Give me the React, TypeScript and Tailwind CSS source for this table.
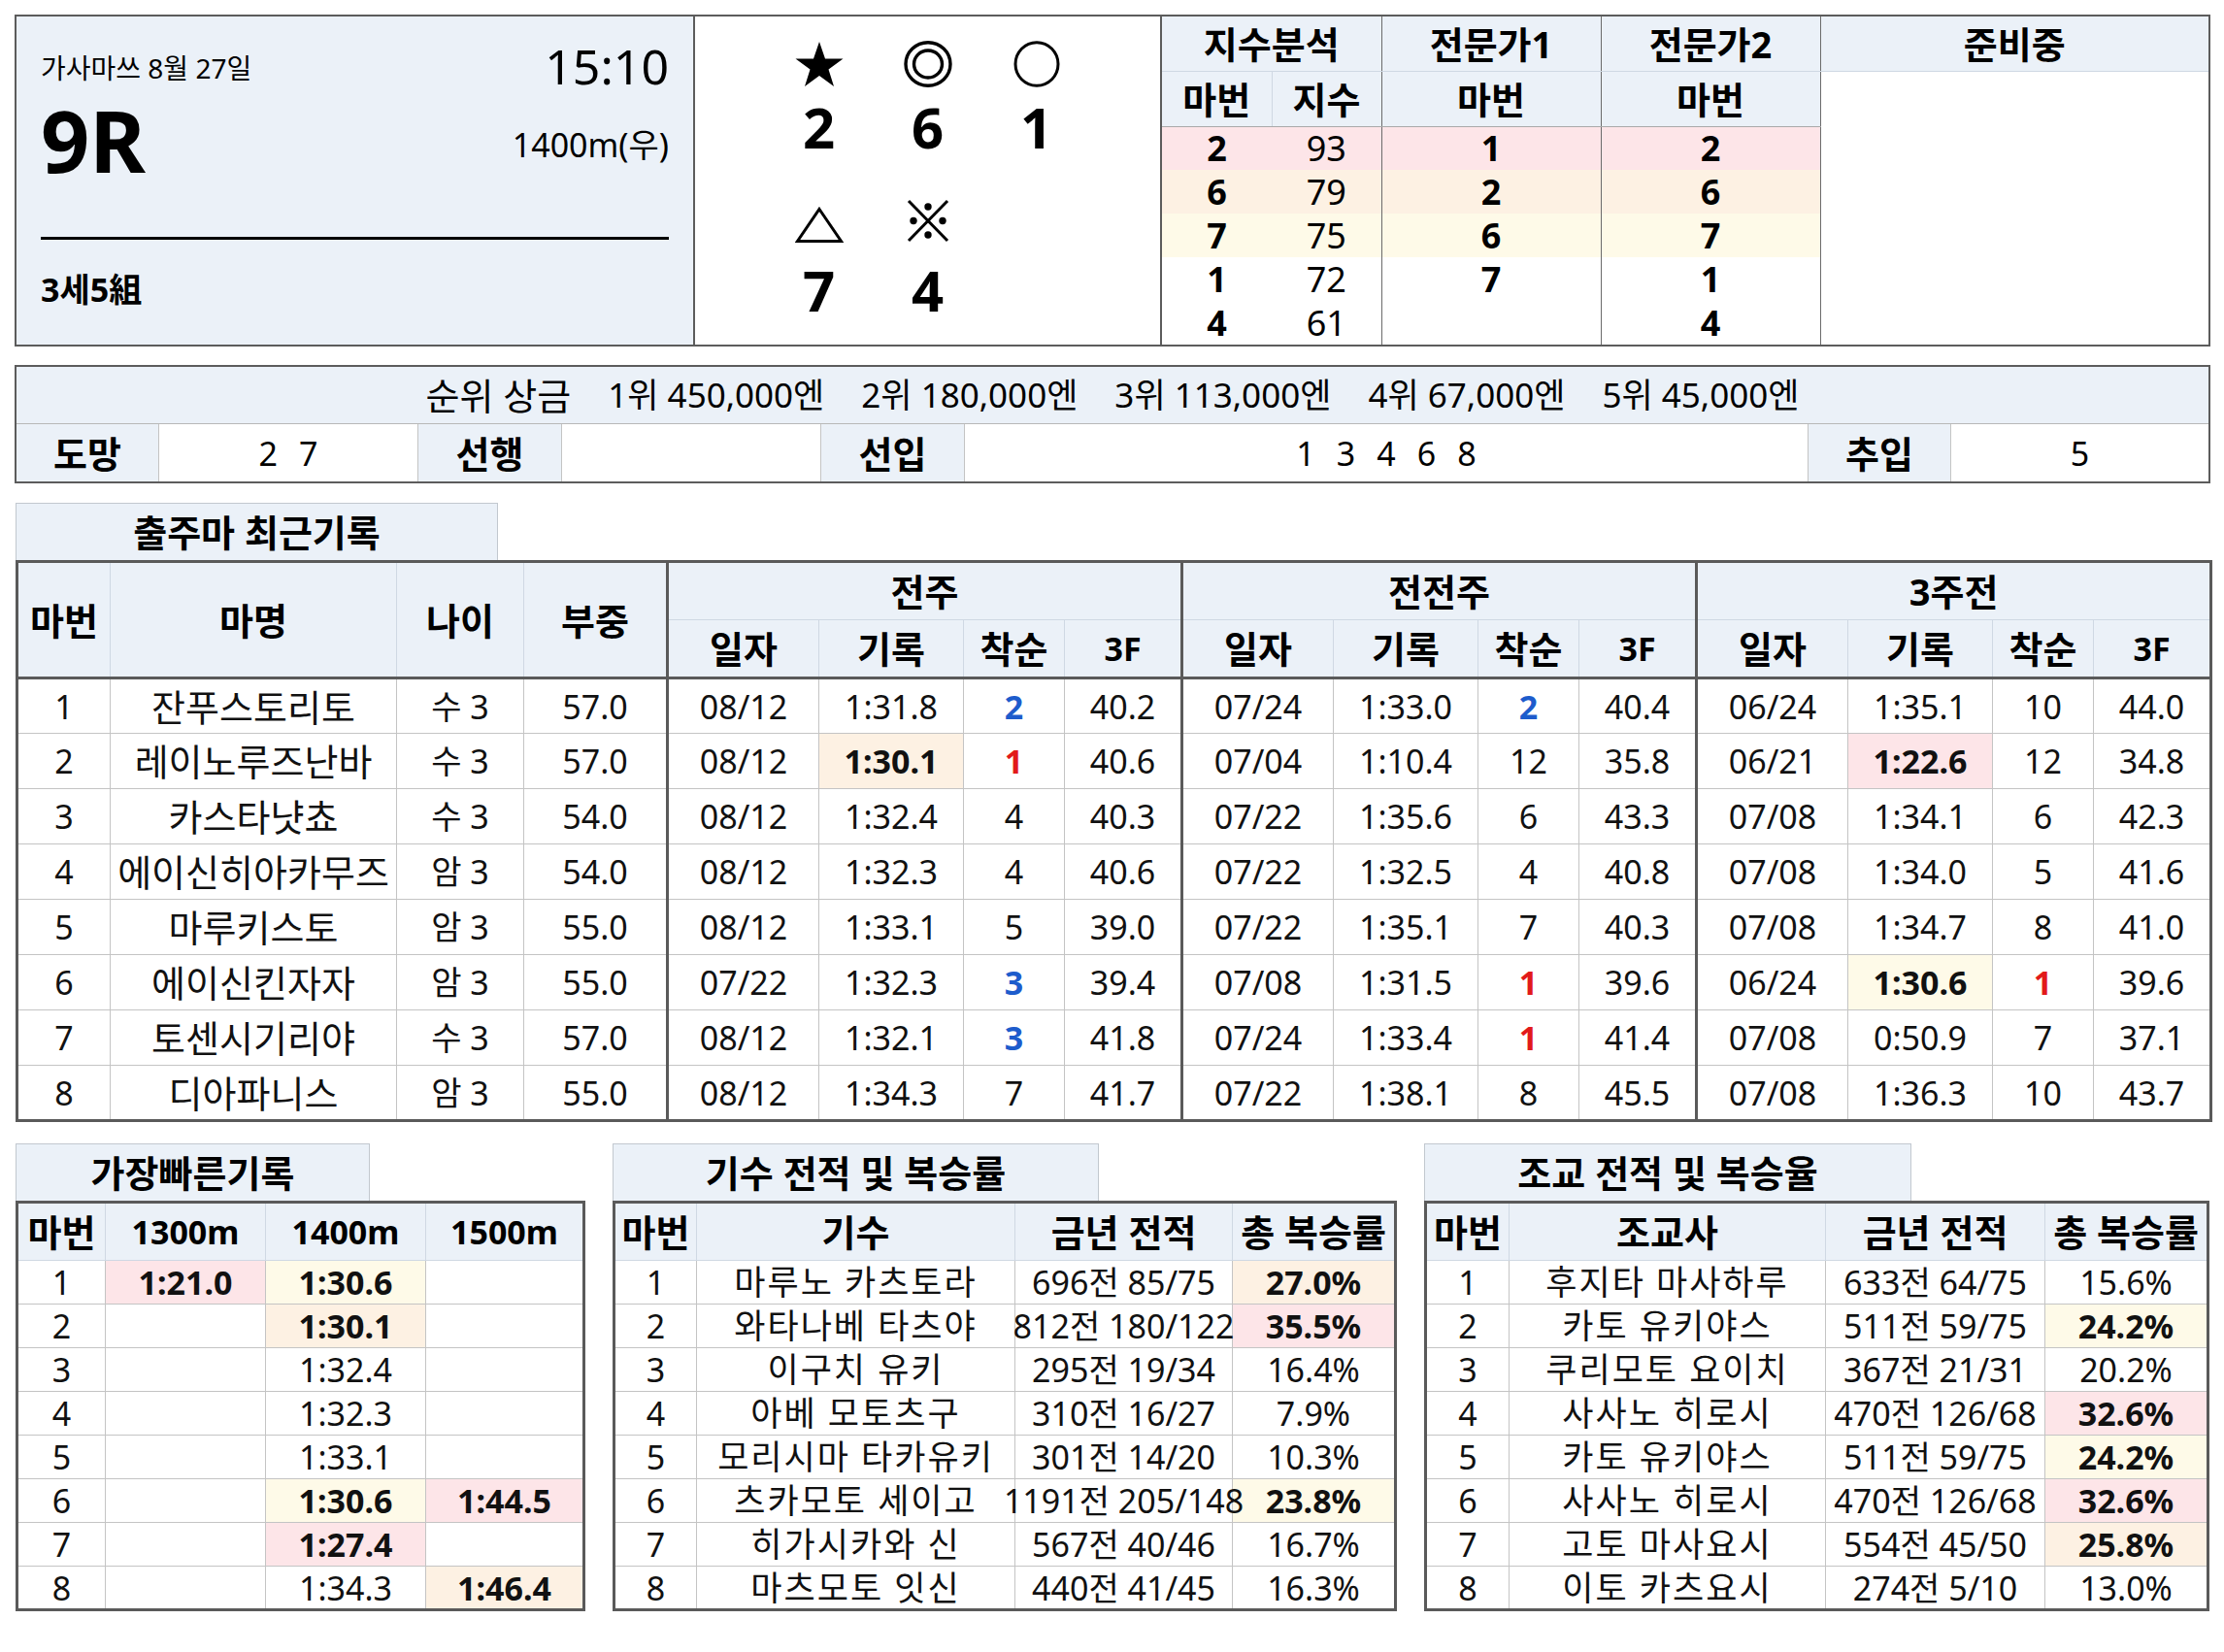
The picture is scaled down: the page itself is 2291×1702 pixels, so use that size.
import React from "react";

const HB = "bg-[#ebf1f8]";
const HL: Record<string, string> = {
  p: "bg-[#fde5e8]",
  o: "bg-[#fdf1e3]",
  y: "bg-[#fefae8]",
};

type Cell = [string, string?];

const runners = [
  { no: 1, name: "잔푸스토리토", age: "수 3", wt: "57.0", g: [["08/12", "1:31.8", "2", "40.2"], ["07/24", "1:33.0", "2", "40.4"], ["06/24", "1:35.1", "10", "44.0"]] },
  { no: 2, name: "레이노루즈난바", age: "수 3", wt: "57.0", g: [["08/12", "1:30.1", "1", "40.6", "o"], ["07/04", "1:10.4", "12", "35.8"], ["06/21", "1:22.6", "12", "34.8", "p"]] },
  { no: 3, name: "카스타냣쵸", age: "수 3", wt: "54.0", g: [["08/12", "1:32.4", "4", "40.3"], ["07/22", "1:35.6", "6", "43.3"], ["07/08", "1:34.1", "6", "42.3"]] },
  { no: 4, name: "에이신히아카무즈", age: "암 3", wt: "54.0", g: [["08/12", "1:32.3", "4", "40.6"], ["07/22", "1:32.5", "4", "40.8"], ["07/08", "1:34.0", "5", "41.6"]] },
  { no: 5, name: "마루키스토", age: "암 3", wt: "55.0", g: [["08/12", "1:33.1", "5", "39.0"], ["07/22", "1:35.1", "7", "40.3"], ["07/08", "1:34.7", "8", "41.0"]] },
  { no: 6, name: "에이신킨자자", age: "암 3", wt: "55.0", g: [["07/22", "1:32.3", "3", "39.4"], ["07/08", "1:31.5", "1", "39.6"], ["06/24", "1:30.6", "1", "39.6", "y"]] },
  { no: 7, name: "토센시기리야", age: "수 3", wt: "57.0", g: [["08/12", "1:32.1", "3", "41.8"], ["07/24", "1:33.4", "1", "41.4"], ["07/08", "0:50.9", "7", "37.1"]] },
  { no: 8, name: "디아파니스", age: "암 3", wt: "55.0", g: [["08/12", "1:34.3", "7", "41.7"], ["07/22", "1:38.1", "8", "45.5"], ["07/08", "1:36.3", "10", "43.7"]] },
];

const fastest: Cell[][] = [
  [["1:21.0", "p"], ["1:30.6", "y"], [""]],
  [[""], ["1:30.1", "o"], [""]],
  [[""], ["1:32.4"], [""]],
  [[""], ["1:32.3"], [""]],
  [[""], ["1:33.1"], [""]],
  [[""], ["1:30.6", "y"], ["1:44.5", "p"]],
  [[""], ["1:27.4", "p"], [""]],
  [[""], ["1:34.3"], ["1:46.4", "o"]],
];

const jockeys: Cell[][] = [
  [["마루노 카츠토라"], ["696전 85/75"], ["27.0%", "o"]],
  [["와타나베 타츠야"], ["812전 180/122"], ["35.5%", "p"]],
  [["이구치 유키"], ["295전 19/34"], ["16.4%"]],
  [["아베 모토츠구"], ["310전 16/27"], ["7.9%"]],
  [["모리시마 타카유키"], ["301전 14/20"], ["10.3%"]],
  [["츠카모토 세이고"], ["1191전 205/148"], ["23.8%", "y"]],
  [["히가시카와 신"], ["567전 40/46"], ["16.7%"]],
  [["마츠모토 잇신"], ["440전 41/45"], ["16.3%"]],
];

const trainers: Cell[][] = [
  [["후지타 마사하루"], ["633전 64/75"], ["15.6%"]],
  [["카토 유키야스"], ["511전 59/75"], ["24.2%", "y"]],
  [["쿠리모토 요이치"], ["367전 21/31"], ["20.2%"]],
  [["사사노 히로시"], ["470전 126/68"], ["32.6%", "p"]],
  [["카토 유키야스"], ["511전 59/75"], ["24.2%", "y"]],
  [["사사노 히로시"], ["470전 126/68"], ["32.6%", "p"]],
  [["고토 마사요시"], ["554전 45/50"], ["25.8%", "o"]],
  [["이토 카츠요시"], ["274전 5/10"], ["13.0%"]],
];

const indexRows: (string | number)[][] = [
  [2, 93, 1, 2],
  [6, 79, 2, 6],
  [7, 75, 6, 7],
  [1, 72, 7, 1],
  [4, 61, "", 4],
];

// Hangul-only labels read small in Noto, so they get a bigger size
const isKo = (t: string) => /^[가-힣 ]+$/.test(t);
const ko = (t: string) => (isKo(t) ? "text-[38px]" : "");
const koSm = (t: string) => (isKo(t) ? "text-[35px] tracking-[2px]" : "");

function rankColor(v: string) {
  if (v === "1") return "font-bold text-[#e21a1a]";
  if (v === "2" || v === "3") return "font-bold text-[#1d5ccc]";
  return "";
}

function Star() {
  return (
    <svg width="50" height="48" viewBox="0 0 50 48">
      <polygon points="25,1 31,18.5 49.5,18.5 34.5,29.5 40,47 25,36 10,47 15.5,29.5 0.5,18.5 19,18.5" fill="#000" />
    </svg>
  );
}

function DoubleCircle() {
  return (
    <svg width="50" height="48" viewBox="0 0 50 48">
      <ellipse cx="25" cy="24" rx="23" ry="22.3" fill="none" stroke="#000" strokeWidth="3.4" />
      <ellipse cx="25" cy="24" rx="14.5" ry="14" fill="none" stroke="#000" strokeWidth="3.4" />
    </svg>
  );
}

function Circle() {
  return (
    <svg width="50" height="48" viewBox="0 0 50 48">
      <ellipse cx="25" cy="24" rx="22" ry="22.3" fill="none" stroke="#000" strokeWidth="3" />
    </svg>
  );
}

function Triangle() {
  return (
    <svg width="50" height="48" viewBox="0 0 50 48">
      <polygon points="25,13.5 47.5,46.5 2.5,46.5" fill="none" stroke="#000" strokeWidth="3" />
    </svg>
  );
}

function Kome() {
  return (
    <svg width="50" height="48" viewBox="0 0 50 48">
      <line x1="5" y1="5" x2="45" y2="46" stroke="#000" strokeWidth="3" />
      <line x1="45" y1="5" x2="5" y2="46" stroke="#000" strokeWidth="3" />
      <circle cx="25" cy="11" r="3.7" fill="#000" />
      <circle cx="25" cy="40" r="3.7" fill="#000" />
      <circle cx="10" cy="25.5" r="3.7" fill="#000" />
      <circle cx="40" cy="25.5" r="3.7" fill="#000" />
    </svg>
  );
}

function Pick({ icon, num, first }: { icon: React.ReactNode; num: string; first?: boolean }) {
  return (
    <div className="flex w-[112px] flex-col items-center">
      <div className={first ? "" : "mt-[42px]"}>{icon}</div>
      <div className={`text-[58px] font-bold leading-[58px] ${first ? "mt-[12px]" : "mt-[20px]"}`}>{num}</div>
    </div>
  );
}

function TopBox() {
  const th = `${HB} font-bold`;
  return (
    <div className="ml-[15px] mt-[15px] flex w-[2262px] border-2 border-[#5c5c5c]">
      <div className={`${HB} flex w-[697px] flex-col px-[25px] pt-[26px]`}>
        <div className="flex h-[50px] items-start justify-between">
          <span className="mt-[13px] text-[28px] leading-[28px]">가사마쓰 8월 27일</span>
          <span className="text-[50px] leading-[50px]">15:10</span>
        </div>
        <div className="mt-[7px] flex h-[88px] items-start justify-between">
          <span className="text-[88px] font-bold leading-[88px]">9R</span>
          <span className="mt-[32px] text-[34px] leading-[34px]">1400m(우)</span>
        </div>
        <div className="mt-[56px] h-[3px] bg-black" />
        <div className="mt-[34px] text-[34px] font-bold leading-[34px]">3세5組</div>
      </div>
      <div className="w-[483px] border-x-2 border-[#5c5c5c] bg-white pt-[25px]">
        <div className="flex justify-center">
          <Pick first icon={<Star />} num="2" />
          <Pick first icon={<DoubleCircle />} num="6" />
          <Pick first icon={<Circle />} num="1" />
        </div>
        <div className="flex justify-center">
          <Pick icon={<Triangle />} num="7" />
          <Pick icon={<Kome />} num="4" />
          <div className="w-[112px]" />
        </div>
      </div>
      <table className="flex-1 table-fixed text-center leading-[40px]">
        <colgroup>
          <col className="w-[113px]" />
          <col className="w-[113px]" />
          <col className="w-[226px]" />
          <col className="w-[226px]" />
          <col />
        </colgroup>
        <thead className="text-[38px]">
          <tr className="h-[56px]">
            <th colSpan={2} className={`${th} border-r border-b border-r-[#6b6b6b] border-b-[#cfd8e3]`}>지수분석</th>
            <th className={`${th} border-r border-b border-r-[#6b6b6b] border-b-[#cfd8e3]`}>전문가1</th>
            <th className={`${th} border-r border-b border-r-[#6b6b6b] border-b-[#cfd8e3]`}>전문가2</th>
            <th className={`${th} border-b border-b-[#cfd8e3]`}>준비중</th>
          </tr>
          <tr className="h-[57px]">
            <th className={`${th} border-r border-b border-r-[#cfd8e3] border-b-[#a9a9a9]`}>마번</th>
            <th className={`${th} border-r border-b border-r-[#6b6b6b] border-b-[#a9a9a9]`}>지수</th>
            <th className={`${th} border-r border-b border-r-[#6b6b6b] border-b-[#a9a9a9]`}>마번</th>
            <th className={`${th} border-r border-b border-r-[#6b6b6b] border-b-[#a9a9a9]`}>마번</th>
            <td rowSpan={6} className="bg-white" />
          </tr>
        </thead>
        <tbody className="text-[36px] leading-[38px]">
          {indexRows.map((r, i) => {
            const bg = i === 0 ? HL.p : i === 1 ? HL.o : i === 2 ? HL.y : "bg-white";
            return (
              <tr key={i} className="h-[45px]">
                <td className={`${bg} font-bold`}>{r[0]}</td>
                <td className={`${bg} border-r border-r-[#6b6b6b]`}>{r[1]}</td>
                <td className={`${r[2] === "" ? "bg-white" : bg} border-r border-r-[#6b6b6b] font-bold`}>{r[2]}</td>
                <td className={`${bg} border-r border-r-[#6b6b6b] font-bold`}>{r[3]}</td>
              </tr>
            );
          })}
        </tbody>
      </table>
    </div>
  );
}

function Spaced({ items }: { items: string[] }) {
  return (
    <div className="flex h-full items-center justify-center gap-[22px] border-r border-[#c4c4c4]">
      {items.map((t, i) => (
        <span key={i}>{t}</span>
      ))}
    </div>
  );
}

function Label({ children }: { children: React.ReactNode }) {
  return (
    <div className={`${HB} flex h-full items-center justify-center border-r border-[#c4c4c4] text-[38px] font-bold`}>
      {children}
    </div>
  );
}

function PrizeBox() {
  return (
    <div className="ml-[15px] mt-[19px] w-[2262px] border-2 border-[#5c5c5c] text-[34px] leading-[40px]">
      <div className={`${HB} flex h-[59px] items-center justify-center gap-[38px] border-b border-[#b8b8b8] text-[35px]`}>
        <span className="text-[38px]">순위 상금</span>
        <span>1위 450,000엔</span>
        <span>2위 180,000엔</span>
        <span>3위 113,000엔</span>
        <span>4위 67,000엔</span>
        <span>5위 45,000엔</span>
      </div>
      <div className="grid h-[59px] grid-cols-[147px_267px_148px_267px_148px_869px_147px_1fr]">
        <Label>도망</Label>
        <Spaced items={["2", "7"]} />
        <Label>선행</Label>
        <Spaced items={[]} />
        <Label>선입</Label>
        <Spaced items={["1", "3", "4", "6", "8"]} />
        <Label>추입</Label>
        <div className="flex h-full items-center justify-center">5</div>
      </div>
    </div>
  );
}

function Tab({ title, w }: { title: string; w: string }) {
  return (
    <div className={`${HB} ${w} flex h-[59px] items-center justify-center border border-b-0 border-[#c2c8cf] text-[38px] font-bold leading-[40px]`}>
      {title}
    </div>
  );
}

function MainTable() {
  const th = `${HB} border border-[#cfd8e3] font-bold`;
  const thG = `${HB} border border-[#cfd8e3] border-l-[3px] border-l-[#5a5a5a] font-bold`;
  const bottom = "border-b-[3px] border-b-[#5a5a5a]";
  const td = "border border-[#c4c4c4]";
  const tdG = "border border-[#c4c4c4] border-l-[3px] border-l-[#5a5a5a]";
  const sub = ["일자", "기록", "착순", "3F"];
  return (
    <div className="ml-[16px] mt-[20px] w-[2260px]">
      <Tab title="출주마 최근기록" w="w-[497px]" />
      <table className="w-full table-fixed border-[3px] border-[#5a5a5a] text-center text-[34px] leading-[40px]">
        <colgroup>
          <col className="w-[96px]" />
          <col className="w-[295px]" />
          <col className="w-[131px]" />
          <col className="w-[148px]" />
          {[0, 1, 2].map((g) => (
            <React.Fragment key={g}>
              <col className="w-[156px]" />
              <col className="w-[149px]" />
              <col className="w-[104px]" />
              <col className="w-[121px]" />
            </React.Fragment>
          ))}
        </colgroup>
        <thead>
          <tr className="h-[60px]">
            {["마번", "마명", "나이", "부중"].map((h) => (
              <th key={h} rowSpan={2} className={`${th} ${bottom} text-[38px]`}>
                {h}
              </th>
            ))}
            {["전주", "전전주", "3주전"].map((h) => (
              <th key={h} colSpan={4} className={`${thG} text-[38px]`}>
                {h}
              </th>
            ))}
          </tr>
          <tr className="h-[60px]">
            {[0, 1, 2].map((g) => (
              <React.Fragment key={g}>
                {sub.map((h, i) => (
                  <th key={h} className={`${i === 0 ? thG : th} ${bottom} ${ko(h)}`}>
                    {h}
                  </th>
                ))}
              </React.Fragment>
            ))}
          </tr>
        </thead>
        <tbody className="text-[#111]">
          {runners.map((r) => (
            <tr key={r.no} className="h-[57px]">
              <td className={td}>{r.no}</td>
              <td className={`${td} whitespace-nowrap text-[38px]`}>{r.name}</td>
              <td className={td}>{r.age}</td>
              <td className={td}>{r.wt}</td>
              {r.g.map((g, i) => (
                <React.Fragment key={i}>
                  <td className={tdG}>{g[0]}</td>
                  <td className={`${td} ${g[4] ? `${HL[g[4]]} font-bold` : ""}`}>{g[1]}</td>
                  <td className={`${td} ${rankColor(g[2])}`}>{g[2]}</td>
                  <td className={td}>{g[3]}</td>
                </React.Fragment>
              ))}
            </tr>
          ))}
        </tbody>
      </table>
    </div>
  );
}

function SmallTable({
  title,
  tabW,
  cols,
  heads,
  rows,
}: {
  title: string;
  tabW: string;
  cols: string[];
  heads: string[];
  rows: Cell[][];
}) {
  const th = `${HB} border border-[#cfd8e3] font-bold whitespace-nowrap`;
  const td = "border border-[#c4c4c4]";
  return (
    <div>
      <Tab title={title} w={tabW} />
      <table className="w-full table-fixed border-[3px] border-[#5a5a5a] text-center text-[34px] leading-[38px]">
        <colgroup>
          {cols.map((c, i) => (
            <col key={i} className={c} />
          ))}
        </colgroup>
        <thead>
          <tr className="h-[60px]">
            {heads.map((h, i) => (
              <th key={i} className={`${th} ${ko(h)}`}>
                <div className="flex justify-center">{h}</div>
              </th>
            ))}
          </tr>
        </thead>
        <tbody className="text-[#111]">
          {rows.map((r, i) => (
            <tr key={i} className="h-[45px]">
              <td className={td}>{i + 1}</td>
              {r.map((c, j) => (
                <td key={j} className={`${td} ${koSm(c[0])} ${c[1] ? `${HL[c[1]]} font-bold` : ""}`}>
                  <div className="flex justify-center whitespace-nowrap">{c[0]}</div>
                </td>
              ))}
            </tr>
          ))}
        </tbody>
      </table>
    </div>
  );
}

export default function App() {
  return (
    <div className="min-h-screen bg-white pb-[40px] font-['Noto_Sans','Noto_Sans_CJK_KR',sans-serif] text-black">
      <TopBox />
      <PrizeBox />
      <MainTable />
      <div className="ml-[16px] mt-[22px] grid w-[2260px] grid-cols-[587px_808px_1fr] gap-[28px]">
        <SmallTable
          title="가장빠른기록"
          tabW="w-[365px]"
          cols={["w-[91px]", "w-[165px]", "w-[165px]", ""]}
          heads={["마번", "1300m", "1400m", "1500m"]}
          rows={fastest}
        />
        <SmallTable
          title="기수 전적 및 복승률"
          tabW="w-[501px]"
          cols={["w-[85px]", "w-[328px]", "w-[224px]", ""]}
          heads={["마번", "기수", "금년 전적", "총 복승률"]}
          rows={jockeys}
        />
        <SmallTable
          title="조교 전적 및 복승율"
          tabW="w-[502px]"
          cols={["w-[86px]", "w-[326px]", "w-[226px]", ""]}
          heads={["마번", "조교사", "금년 전적", "총 복승률"]}
          rows={trainers}
        />
      </div>
    </div>
  );
}
